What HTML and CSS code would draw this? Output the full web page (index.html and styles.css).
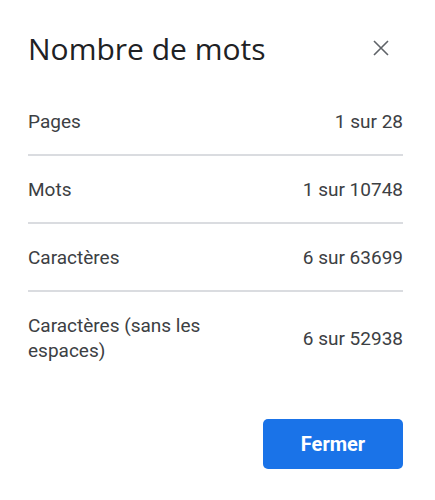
FILE: index.html
```html
<!DOCTYPE html>
<html lang="fr">
<head>
    <meta charset="UTF-8">
    <title>Nombre de mots</title>
    <link rel="stylesheet" href="styles.css">
</head>
<body>
<div class="dialog">
    <div class="dialog-head">
        <h1 class="dialog-title">Nombre de mots</h1>
        <button class="close" title="Fermer">
            <svg width="16" height="16" viewBox="0 0 16 16">
                <path d="M1 1L15 15M15 1L1 15" stroke="#5f6368" stroke-width="1.6" fill="none"/>
            </svg>
        </button>
    </div>

    <ul class="stats">
        <li class="stat">
            <span class="stat-label">Pages</span>
            <span class="stat-value">1 sur 28</span>
        </li>
        <li class="stat">
            <span class="stat-label">Mots</span>
            <span class="stat-value">1 sur 10748</span>
        </li>
        <li class="stat">
            <span class="stat-label">Caractères</span>
            <span class="stat-value">6 sur 63699</span>
        </li>
        <li class="stat">
            <span class="stat-label">Caractères (sans les espaces)</span>
            <span class="stat-value">6 sur 52938</span>
        </li>
    </ul>

    <div class="dialog-foot">
        <button class="btn-primary">Fermer</button>
    </div>
</div>
</body>
</html>
```

FILE: styles.css
```css
body {
    margin: 0;
    background: #fff;
    font-family: Roboto, "Liberation Sans", sans-serif;
}

.dialog {
    padding: 28px 32px 0 28px;
}

.dialog-head {
    display: flex;
    align-items: center;
    justify-content: space-between;
    height: 40px;
}

.dialog-title {
    margin: 0;
    font-family: "Open Sans", sans-serif;
    font-size: 30px;
    font-weight: 400;
    color: #202124;
}

.close {
    border: 0;
    background: none;
    padding: 0;
    margin-right: 14px;
    width: 16px;
    height: 16px;
    display: flex;
}

.stats {
    list-style: none;
    margin: 20px 0 0;
    padding: 0;
}

.stat {
    display: flex;
    align-items: center;
    justify-content: space-between;
    min-height: 66px;
    border-bottom: 2px solid #dadce0;
    font-size: 19px;
    line-height: 25px;
    color: #3c4043;
}

.stat:last-child {
    border-bottom: 0;
    min-height: 92px;
}

.stat-label {
    max-width: 200px;
}

.dialog-foot {
    display: flex;
    justify-content: flex-end;
    margin-top: 35px;
}

.btn-primary {
    width: 140px;
    height: 50px;
    border: 0;
    border-radius: 5px;
    background: #1a73e8;
    color: #fff;
    font-family: Roboto, sans-serif;
    font-size: 20px;
    font-weight: 700;
}
```
